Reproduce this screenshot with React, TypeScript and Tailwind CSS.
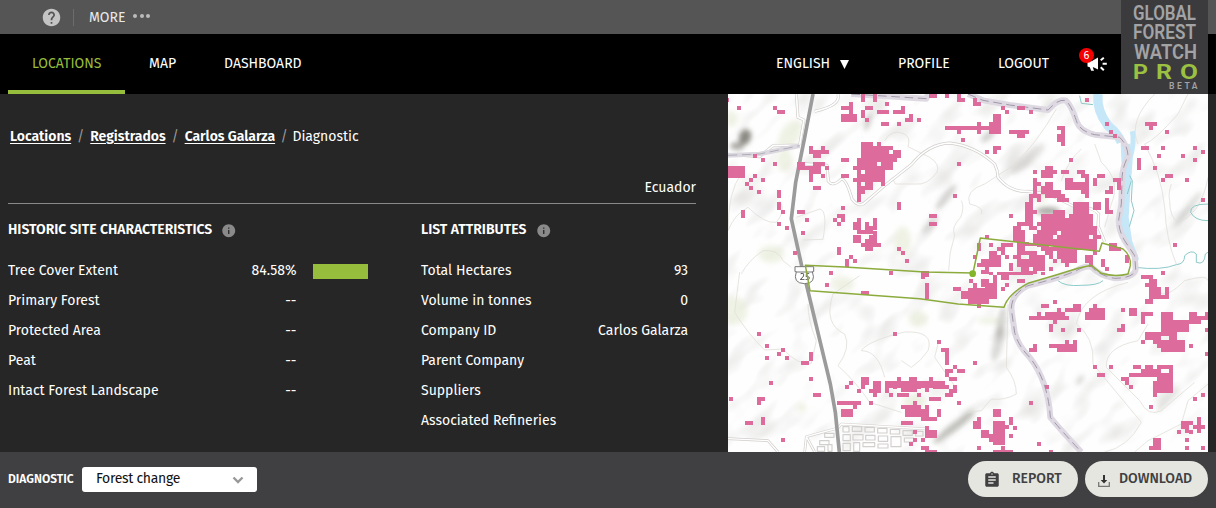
import React from "react";
import { MdAssignment, MdInfo, MdHelp } from "react-icons/md";

// Alert cells per map quadrant: x, y, width, height in thirds of a pixel.
const NW = `27 36 12 12;135 36 12 12;147 48 24 12;0 12 3 12;399 0 12 24;435 0 12 24;363 24 12 36;339 36 36 12;339 60 48 24;399 48 12 24;411 36 24 12;411 72 12 12;471 24 12 12;447 48 36 12;495 48 36 12;519 36 12 12;531 72 24 12;543 60 12 24;567 72 12 12;459 84 24 12;507 84 12 12;603 0 24 12;651 0 12 12;687 0 12 24;699 12 12 12;651 96 69 12;687 108 12 12;699 132 12 12;
399 144 36 12;447 144 12 12;399 156 96 12;399 168 84 12;495 168 24 12;399 180 120 12;387 192 120 12;387 204 60 12;459 204 36 12;375 216 120 12;387 228 12 12;411 228 60 12;387 240 84 12;375 252 96 12;387 264 12 12;411 264 24 12;459 252 12 24;387 276 48 12;387 288 24 12;387 300 12 24;
243 156 12 24;279 156 12 24;255 168 48 12;255 180 24 12;207 204 24 24;231 216 12 12;255 204 36 12;243 216 36 12;291 216 12 12;255 228 24 12;243 228 12 36;279 240 12 12;255 276 24 12;339 192 24 12;339 240 24 12;0 216 51 36;75 180 12 12;99 192 12 12;135 204 12 12;75 240 12 12;63 252 12 12;51 264 12 12;99 252 12 12;63 276 12 12;87 288 12 12;147 288 12 24;147 324 12 24;159 348 12 12;39 348 12 24;147 384 12 12;171 396 12 12;207 348 24 12;231 372 12 12;219 411 12 12;195 471 12 12;339 336 12 12;327 360 24 12;339 372 12 12;315 372 12 12;327 384 12 12;507 324 12 24;603 360 24 12;603 384 24 12;675 300 12 12;687 204 12 12;
387 372 12 12;435 372 12 24;375 384 24 24;411 384 12 12;411 396 36 12;399 408 36 12;387 408 12 12;435 411 12 12;375 423 24 24;423 423 24 12;411 435 36 12;399 447 60 12;411 459 24 12;327 459 12 24;363 483 12 12;351 495 12 24;375 495 12 12;507 459 12 12;519 471 12 12;531 495 12 12;303 531 12 12;483 531 12 12;579 531 24 12`;
const NE = `15 12 12 24;27 24 12 12;99 36 12 12;111 48 12 12;147 36 24 12;183 48 12 12;351 12 12 12;75 60 24 24;27 84 12 12;0 96 99 12;27 108 12 12;63 84 36 36;123 108 60 12;147 120 24 12;267 96 24 12;279 108 12 48;267 120 12 24;75 156 24 12;75 168 12 12;51 168 12 12;303 192 12 12;411 84 12 12;423 108 12 12;435 120 12 12;531 84 36 12;543 96 12 12;591 108 12 12;519 156 24 12;507 192 12 36;579 156 12 12;567 180 12 12;555 216 12 12;639 180 12 12;675 156 12 12;699 168 12 12;675 192 12 12;591 240 24 12;579 252 12 12;651 252 12 12;699 312 12 12;615 447 12 12;579 531 12 12;123 360 12 12;51 423 12 12;
195 228 12 12;231 216 24 12;219 228 48 12;219 240 36 12;279 228 24 12;327 228 24 12;339 240 24 12;195 252 12 60;207 264 12 12;291 252 24 36;315 264 48 24;351 240 12 72;339 288 12 12;291 276 60 12;231 264 24 12;219 276 36 12;195 288 12 12;219 288 60 12;207 300 12 24;231 300 60 12;267 312 36 12;375 252 12 24;387 240 24 12;435 252 24 12;447 264 12 24;423 276 12 24;411 288 24 12;375 324 24 24;411 312 12 48;423 348 12 12;
183 300 12 84;171 324 24 60;195 348 12 12;255 348 36 24;219 360 72 24;315 324 48 48;303 360 72 24;147 384 48 12;135 396 24 48;159 408 12 36;147 444 48 6;183 384 12 24;171 396 12 6;219 372 156 36;195 396 72 60;207 384 12 24;267 396 120 72;279 372 96 36;243 432 36 24;375 396 12 48;387 423 12 12;159 444 48 12;147 435 12 24;
27 447 12 24;63 447 12 12;87 459 24 12;99 447 36 12;75 471 12 12;15 483 12 12;63 471 24 48;39 495 60 12;27 507 48 12;39 519 24 21;75 483 24 36;99 471 12 12;111 483 12 12;147 447 24 36;171 471 36 12;207 447 36 12;219 459 108 12;231 471 24 12;267 471 60 24;135 483 24 12;123 507 12 24;147 495 60 24;159 519 48 21;183 483 48 24;207 507 24 24;243 483 12 12;255 495 12 12;243 519 12 12;279 483 48 24;291 507 12 12;351 483 24 24;375 471 12 12;363 495 12 24;399 495 12 24;411 519 12 12;423 447 24 24;447 459 12 12;471 483 12 24`;
const SW = `303 0 12 6;483 0 12 6;579 3 24 12;579 12 12 8;291 33 12 12;399 57 24 12;591 33 12 48;675 45 24 12;699 57 21 24;87 180 12 12;495 180 12 12;627 204 12 12;111 216 12 12;111 252 12 12;147 240 12 12;159 228 12 12;171 252 12 12;219 267 24 12;243 240 12 27;639 228 24 12;651 240 12 39;651 291 24 12;675 279 12 12;687 291 24 12;651 303 12 12;663 315 24 12;243 315 12 12;123 327 12 12;255 363 24 12;3 375 12 12;87 375 24 12;87 387 12 12;51 447 24 12;99 435 12 24;159 498 12 12;351 339 12 12;363 327 12 12;387 351 12 12;399 315 12 36;411 315 12 12;411 327 12 12;435 327 24 12;435 339 12 24;423 351 36 12;435 363 12 12;447 339 12 12;471 327 180 21;471 348 12 15;507 315 12 12;543 315 24 12;603 315 12 12;495 339 12 12;519 348 48 12;507 363 36 12;483 363 12 12;543 339 36 12;591 348 12 12;615 339 12 12;627 339 36 12;675 339 12 24;651 363 24 12;663 351 12 12;603 375 36 12;567 363 12 12;423 387 12 12;327 387 72 12;375 399 12 12;339 411 36 24;555 387 12 12;519 399 12 12;531 399 48 36;579 411 24 24;591 399 12 48;579 435 12 12;603 435 24 12;627 411 12 24;519 447 36 12;555 473 12 12;591 463 12 36;603 473 24 24;555 498 12 12;543 510 12 12;579 498 12 12;579 522 24 12;591 534 36 8;687 387 12 12`;
const SE = `63 0 12 8;87 0 12 8;99 0 24 24;123 0 72 8;147 21 24 12;99 45 12 12;111 33 12 12;219 0 12 8;3 21 12 12;15 33 12 24;0 48 51 24;0 60 63 36;39 21 24 24;51 33 36 48;75 9 12 72;27 96 12 12;255 84 12 12;219 96 24 12;315 96 24 12;291 108 48 12;267 108 12 12;231 120 60 12;207 120 12 12;183 132 120 12;255 144 12 12;243 156 12 24;279 168 12 12;327 168 12 12;351 120 60 24;363 108 48 12;375 96 12 12;459 108 12 12;483 108 24 24;519 120 36 12;519 132 12 24;459 156 12 12;447 168 24 12;195 216 12 12;183 228 24 12;243 216 84 12;267 228 60 12;291 204 12 12;315 204 12 12;519 9 36 12;579 0 12 9;543 21 24 12;531 33 36 12;555 33 12 24;543 45 36 36;531 81 24 14;579 69 12 12;591 45 12 36;567 60 12 21;
579 120 36 72;603 144 60 36;663 120 24 36;687 132 33 12;675 144 24 12;711 120 9 12;711 168 9 12;531 180 48 24;519 204 12 12;555 192 24 24;579 204 60 36;567 216 12 12;639 204 12 24;627 228 24 12;603 180 24 24;663 216 12 12;711 240 9 12;15 267 12 12;375 279 12 12;423 279 12 12;387 303 24 12;231 339 12 12;183 387 12 12;459 315 24 12;471 327 12 12;483 303 84 12;495 279 24 12;519 291 48 12;531 279 24 12;483 339 12 12;567 279 48 12;567 291 12 24;579 303 36 12;603 279 12 84;567 315 36 48;555 327 12 48;543 399 12 12;675 375 12 12;699 363 12 12;75 411 24 24;27 435 12 24;15 447 24 24;39 473 24 24;75 447 36 72;63 485 36 24;123 435 12 24;111 459 12 12;135 461 12 12;123 485 12 12;207 510 12 12;27 522 12 12;99 522 12 12;75 534 60 8;243 534 12 8;555 498 24 36;543 522 24 12;639 447 36 12;639 459 24 12;651 459 12 24;627 473 12 12;663 473 12 12;675 459 36 12;687 435 12 48;651 498 12 12;651 522 12 12;699 522 12 12`;

const cells = (s: string, ox: number, oy: number) =>
  s
    .split(";")
    .map((r) => {
      const [x, y, w, h] = r.trim().split(" ").map(Number);
      return `M${x + ox} ${y + oy}h${w}v${h}h${-w}z`;
    })
    .join("");

const holes = cells(
  "171 396 12 12;255 423 12 12;267 411 12 12;195 408 12 12;207 396 12 12;363 423 12 12;183 435 12 12;183 519 12 12;39 519 12 9;291 360 12 12",
  720,
  0
);

const shades: [number, number, number, number, number, number][] = [
  [17, 43, 6, 8, 20, 0.85], [9, 52, 7, 4, 0, 0.6], [140, 28, 3, 9, 20, 0.35], [142, 92, 4, 14, 35, 0.1],
  [218, 103, 4, 16, 38, 0.3], [202, 130, 4, 12, 40, 0.22], [320, 117, 12, 4, 0, 0.6], [300, 65, 6, 22, 48, 0.2],
  [318, 15, 4, 12, 40, 0.14], [260, 42, 4, 9, 50, 0.3], [273, 228, 4, 16, 12, 0.3], [270, 250, 5, 18, 15, 0.26],
  [226, 333, 4, 26, 52, 0.45], [460, 115, 4, 22, 38, 0.22], [440, 305, 4, 16, 45, 0.18], [352, 286, 3, 6, 35, 0.25],
];

const roads =
  "M0 181L95 188L135 155L215 153M205 0L210 70L228 78L215 153M330 0Q340 35 260 52M210 208L297 214L301 262Q315 280 340 255Q355 255 372 315Q395 345 415 322L470 275L550 212Q600 150 665 147Q740 155 800 210Q810 230 810 250Q845 295 900 292L960 300L1055 345Q1090 335 1112 360L1110 395L1130 443";
const streets = "M0 1034L120 1040L150 1074M230 1074L235 1028L330 1002L340 990L600 1005M235 1028L260 1074";
const railway =
  "M370 0L595 14L600 0M720 0L765 19L845 33L960 48L980 29Q1000 15 1014 20Q1030 35 1045 80Q1055 112 1100 122L1175 130Q1200 155 1200 188Q1182 220 1182 260L1180 330L1172 378Q1172 410 1190 440L1220 485L1223 525Q1220 552 1160 553Q1115 545 1090 518Q1070 515 1045 530Q1000 550 900 575Q850 600 850 645L860 715Q870 755 905 790Q960 860 967 970Q1000 1010 1060 1074";

function SiteMap() {
  return (
    <svg className="block h-[358px] w-[480px] shrink-0 bg-[#fefefe]" viewBox="0 0 1440 1074">
      <defs>
        <filter id="soft" x="-60%" y="-60%" width="220%" height="220%">
          <feGaussianBlur stdDeviation="8" />
        </filter>
        <filter id="relief" x="0" y="0" width="100%" height="100%">
          <feTurbulence type="fractalNoise" baseFrequency="0.009 0.017" numOctaves="2" seed="8" />
          <feColorMatrix values="0 0 0 0 .55  0 0 0 0 .54  0 0 0 0 .52  .95 0 0 0 -.47" />
        </filter>
      </defs>
      <g transform="rotate(-42 720 537)">
        <rect x="-300" y="-400" width="2040" height="1874" filter="url(#relief)" />
      </g>
      <g filter="url(#soft)">
        <g fill="#dfe8cb" opacity="0.5">
          <ellipse cx="185" cy="125" rx="28" ry="52" transform="rotate(30 185 125)" />
          <ellipse cx="10" cy="75" rx="18" ry="24" />
          <ellipse cx="170" cy="200" rx="24" ry="32" />
          <ellipse cx="524" cy="440" rx="25" ry="42" />
          <ellipse cx="130" cy="480" rx="38" ry="26" />
          <ellipse cx="20" cy="650" rx="38" ry="42" />
          <ellipse cx="345" cy="570" rx="34" ry="22" />
          <ellipse cx="570" cy="675" rx="28" ry="24" />
          <ellipse cx="560" cy="925" rx="35" ry="24" />
          <ellipse cx="220" cy="940" rx="14" ry="14" />
          <ellipse cx="785" cy="680" rx="36" ry="10" />
          <ellipse cx="940" cy="300" rx="16" ry="30" />
        </g>
        {shades.map(([x, y, rx, ry, a, o], i) => (
          <ellipse key={i} cx={x * 3} cy={y * 3} rx={rx * 3} ry={ry * 3} fill="#77756c" opacity={o} transform={`rotate(${a} ${x * 3} ${y * 3})`} />
        ))}
      </g>
      <g fill="none" stroke="#e2e0da" strokeWidth="2.5">
        <path d="M470 140q20-35 55-22q25 10 15 40l65 32q32 20 22 45q-30 40-65 35h-60l-10-20M700 320q10 20-2 50q-30 30-18 55q-18 50-18 105" />
        <path d="M40 240Q0 290 0 410Q20 360 60 340Q110 390 145 385Q175 350 155 320M205 370L275 345Q300 350 285 436L225 438M40 540Q60 500 105 470Q150 465 165 500L190 520" />
        <path d="M35 534L20 655Q60 720 110 768L165 765Q210 815 250 808L265 740Q240 680 240 630M395 545L315 600Q285 690 350 720Q370 760 330 815Q390 870 425 925L520 955M400 770Q420 740 530 714Q620 710 600 770Q580 800 550 820L520 800M400 770Q450 770 470 850M630 750L620 790L690 890" />
        <path d="M985 45Q925 150 855 215L770 270Q710 290 725 330Q770 340 760 360M1060 165Q1020 200 1000 260M1100 150L1120 205Q1180 260 1150 330L1130 400M1380 0L1350 60Q1280 140 1250 150Q1300 240 1310 340Q1315 440 1345 510M1280 0Q1200 80 1230 150M1440 250Q1420 360 1350 385Q1325 370 1325 320Q1320 300 1330 270" />
        <path d="M840 630L835 820Q865 860 865 900Q830 920 790 915L760 950L720 955M1200 565Q1060 600 1045 690Q1100 730 1095 810L1240 985Q1200 1060 1130 1074M1260 690L1230 740Q1130 760 1135 820L1235 920Q1260 970 1300 950L1400 865M1440 870L1380 920L1360 990L1260 1040L1220 1074M1280 560Q1290 640 1370 560Q1440 540 1440 560" />
      </g>
      <g fill="none" strokeLinejoin="round">
        <path d={roads} stroke="#d0cecb" strokeWidth="9" />
        <path d={roads} stroke="#fff" strokeWidth="5" />
        <path d={streets} stroke="#d0cecb" strokeWidth="8" />
        <path d={streets} stroke="#fff" strokeWidth="4" />
        <path d="M345 998h18v16h-18zM373 998h28v14h-28zM411 1000h28v14h-28zM449 1003h28v14h-28zM487 1006h28v14h-28zM525 1010h28v14h-28zM563 1012h22v14h-22zM345 1022h22v18h-22zM375 1022h30v16h-30zM413 1024h28v14h-28zM451 1026h28v16h-28zM489 1028h30v30h-30zM529 1032h28v12h-28zM345 1048h22v22h-22zM377 1046h18v26h-18zM405 1046h35v12h-35zM450 1050h30v12h-30zM290 1018h28v12h-28zM275 1040h28v12h-28zM300 1052h12v20h-12zM268 1058h22v14h-22z" stroke="#d2d0cd" strokeWidth="3.5" />
      </g>
      <g fill="none">
        <path d="M1110 0Q1105 50 1140 95Q1170 120 1180 145" stroke="#c5e7f8" strokeWidth="28" />
        <path d="M1213 112Q1220 145 1207 190L1203 242" stroke="#c5e7f8" strokeWidth="15" />
        <path d="M1192 150L1196 240L1188 370L1198 440" stroke="#c5e7f8" strokeWidth="28" />
        <path d="M1195 420L1225 500" stroke="#c5e7f8" strokeWidth="18" />
        <path d="M1055 5L1060 28L1095 32M1205 245L1213 260L1210 320L1218 350L1204 398M1210 260L1198 300M1440 330Q1385 330 1388 355Q1400 380 1440 380M1220 520Q1300 530 1345 512Q1370 510 1370 485Q1390 465 1405 480L1405 505Q1430 515 1432 480L1440 475M990 560Q1010 578 1060 574Q1110 574 1125 560" stroke="#8cc9c8" strokeWidth="3" />
        <path d="M0 184L95 180L215 155" stroke="#dcd8e0" strokeWidth="14" />
        <path d="M0 184L95 180L215 155" stroke="#9d98a5" strokeWidth="2" strokeDasharray="28 14" />
        <path d={railway} stroke="#ddd8e1" strokeWidth="18" strokeLinejoin="round" />
        <path d={railway} stroke="#938d9c" strokeWidth="2.5" strokeDasharray="26 14" />
        <path d="M255 0L230 130L203 265L190 375L222 520L236 575L307 870L322 955L334 1074" stroke="#9b9b9b" strokeWidth="11" />
      </g>
      <g shapeRendering="crispEdges">
        <path d={cells(NW, 0, 0) + cells(NE, 720, 0) + cells(SW, 0, 534) + cells(SE, 720, 534)} fill="#dd6b9b" />
        <path d={holes} fill="#fdf5f8" />
      </g>
      <path d="M201 518H257V533H253Q266 568 230 569Q193 568 205 533H201Z" fill="#fff" stroke="#777" strokeWidth="3" />
      <path d="M205 534H253" stroke="#777" strokeWidth="3" />
      <text x="231" y="557" textAnchor="middle" fontSize="27" fill="#444" className="font-['Noto_Sans']">25</text>
      <path d="M232 514L350 519L590 534L735 537L757 432L1114 472L1122 447L1185 465Q1210 485 1207 515L1200 540Q1160 550 1120 538L1090 514L1050 523Q980 545 900 568Q840 600 828 640L690 630L575 614L246 590Z" fill="none" stroke="#8cab3d" strokeWidth="4.5" strokeLinejoin="round" />
      <circle cx="734" cy="539" r="10" fill="#82b52a" />
    </svg>
  );
}

function Logo() {
  return (
    <svg className="absolute left-[1121px] top-0 h-[94px] w-[87px] bg-[#3b3b3d] font-['Roboto']" viewBox="0 0 87 94">
      <g fill="#a3a3a5" fontWeight="600" fontSize="20">
        <text x="12" y="19.6" textLength="63" lengthAdjust="spacingAndGlyphs">GLOBAL</text>
        <text x="12" y="38.6" textLength="63" lengthAdjust="spacingAndGlyphs">FOREST</text>
        <text x="13" y="58.6" textLength="63" lengthAdjust="spacingAndGlyphs">WATCH</text>
      </g>
      <g fill="#9bc042" fontWeight="700" fontSize="20.5">
        <text x="12" y="78.5" textLength="15" lengthAdjust="spacingAndGlyphs">P</text>
        <text x="35" y="78.5" textLength="16" lengthAdjust="spacingAndGlyphs">R</text>
        <text x="59" y="78.5" textLength="18" lengthAdjust="spacingAndGlyphs">O</text>
      </g>
      <text x="48" y="89" textLength="28.5" fontSize="8.5" fontWeight="600" fill="#a3a3a5">BETA</text>
    </svg>
  );
}

function Megaphone() {
  return (
    <svg className="size-6" viewBox="0 0 24 24">
      <path d="M13 5.5V17.5L8.5 15.2L7.8 15.4L9 18.8H6.2L4.8 15.2L2.5 14.6V10L7 9Z" fill="#fff" />
      <path d="M15.7 8.3L18.8 5.8M17.6 11.7H21.8M15.7 15.2L18.8 18.2" stroke="#fff" strokeWidth="2" />
    </svg>
  );
}

const historic = [
  ["Tree Cover Extent", "84.58%"],
  ["Primary Forest", "--"],
  ["Protected Area", "--"],
  ["Peat", "--"],
  ["Intact Forest Landscape", "--"],
];
const attributes = [
  ["Total Hectares", "93"],
  ["Volume in tonnes", "0"],
  ["Company ID", "Carlos Galarza"],
  ["Parent Company", ""],
  ["Suppliers", ""],
  ["Associated Refineries", ""],
];

const crumb = "font-semibold tracking-[-0.03px] underline underline-offset-2";

export default function App() {
  return (
    <div className="relative flex h-[508px] w-[1216px] flex-col overflow-hidden whitespace-nowrap bg-[#262626] font-['Fira_Sans','Noto_Sans',sans-serif] text-[14px] leading-5 text-white">
      <div className="flex h-[34px] shrink-0 items-center bg-[#555] pl-[41px] text-[#e8e8e8]">
        <MdHelp className="size-[21px] text-[#c4c4c4]" />
        <div className="ml-[11px] h-[17px] w-px bg-[#6c6c6c]" />
        <span className="ml-[15px] pt-0.5">MORE</span>
        <div className="-mt-0.5 ml-2 flex gap-[2.3px]">
          <i className="size-1 rounded-full bg-[#bbb]" />
          <i className="size-1 rounded-full bg-[#bbb]" />
          <i className="size-1 rounded-full bg-[#bbb]" />
        </div>
      </div>
      <nav className="flex h-[60px] shrink-0 bg-black pl-2 leading-[60px]">
        <span className="w-[117px] border-b-4 border-[#97bd3d] pl-6 text-[#97bd3d]">LOCATIONS</span>
        <span className="w-[75px] pl-6">MAP</span>
        <span className="w-[576px] pl-6">DASHBOARD</span>
        <span className="flex w-[122px] items-center gap-2.5">
          <span>ENGLISH</span>
          <svg className="h-[9px] w-[9px]" viewBox="0 0 9 9"><path d="M0 0H9L4.5 9Z" fill="#fff" /></svg>
        </span>
        <span className="w-[100px]">PROFILE</span>
        <span className="w-[87px]">LOGOUT</span>
        <span className="relative pt-[18px]">
          <Megaphone />
          <span className="absolute -left-[6px] top-[14px] size-[15px] rounded-full bg-[#f50000] text-center text-[11px] leading-[15px]">6</span>
        </span>
      </nav>
      <Logo />
      <div className="flex h-[358px] shrink-0">
        <main className="w-[728px] pl-2">
          <div className="ml-0.5 flex pt-[33px] leading-5">
            <span className={crumb}>Locations</span>
            <span className="mx-[5.9px] text-[#999]">/</span>
            <span className={crumb}>Registrados</span>
            <span className="mx-[5.9px] text-[#999]">/</span>
            <span className={crumb}>Carlos Galarza</span>
            <span className="ml-[5.5px] mr-[4.5px] text-[#999]">/</span>
            <span>Diagnostic</span>
          </div>
          <div className="mt-[31px] h-[26px] w-[688px] border-b border-[#8a8a8a] text-right">Ecuador</div>
          <div className="flex">
            <section className="w-[413px]">
              <h2 className="flex h-[52px] items-center gap-[9px] pb-px font-semibold">
                <span className="tracking-[-0.02px]">HISTORIC SITE CHARACTERISTICS</span>
                <MdInfo className="mt-0.5 size-[15.5px] text-[#8a8a8a]" />
              </h2>
              {historic.map(([a, b]) => (
                <div key={a} className="flex h-[30px] items-center">
                  <span className="w-[200px]">{a}</span>
                  <span className="w-[88.5px] text-right">{b}</span>
                  {b !== "--" && <div className="ml-[16.5px] h-[15px] w-[55px] bg-[#97bd3d]" />}
                </div>
              ))}
            </section>
            <section className="w-[267px]">
              <h2 className="flex h-[52px] items-center gap-2.5 pb-px font-semibold">
                <span>LIST ATTRIBUTES</span>
                <MdInfo className="mt-0.5 size-[15.5px] text-[#8a8a8a]" />
              </h2>
              {attributes.map(([a, b]) => (
                <div key={a} className="flex h-[30px] items-center justify-between">
                  <span>{a}</span>
                  <span>{b}</span>
                </div>
              ))}
            </section>
          </div>
        </main>
        <SiteMap />
      </div>
      <footer className="flex h-[56px] shrink-0 items-center bg-[#404042] pb-[3px] pl-2">
        <span className="w-[74px] text-[12px] font-semibold">DIAGNOSTIC</span>
        <div className="mt-[2px] flex h-[25px] w-[175px] items-center justify-between rounded-[3px] bg-white pl-3.5 pr-[13px] text-[#111]">
          <span className="-mt-px tracking-[-0.3px]">Forest change</span>
          <svg className="h-2.5 w-3" viewBox="0 0 12 10" fill="none"><path d="M1.5 2.5L6 7L10.5 2.5" stroke="#999" strokeWidth="2.4" /></svg>
        </div>
        <button className="ml-[711px] flex h-9 w-[110px] items-center rounded-full bg-[#e5e6e0] pl-[15px] font-medium text-[#404042]">
          <MdAssignment className="mt-0.5 size-[18px]" />
          <span className="ml-[11px] pt-px">REPORT</span>
        </button>
        <button className="ml-[7px] flex h-9 w-[123px] items-center rounded-full bg-[#e5e6e0] pl-[13px] font-medium text-[#404042]">
          <svg className="mt-1 h-3 w-3" viewBox="0 0 12 12"><path d="M.7 7V11.3H11.3V7" fill="none" stroke="#77777a" strokeWidth="1.3" /><path d="M5 0H7V5H9.3L6 8.6L2.7 5H5Z" fill="#333" /></svg>
          <span className="ml-[9px] pt-px">DOWNLOAD</span>
        </button>
      </footer>
    </div>
  );
}
